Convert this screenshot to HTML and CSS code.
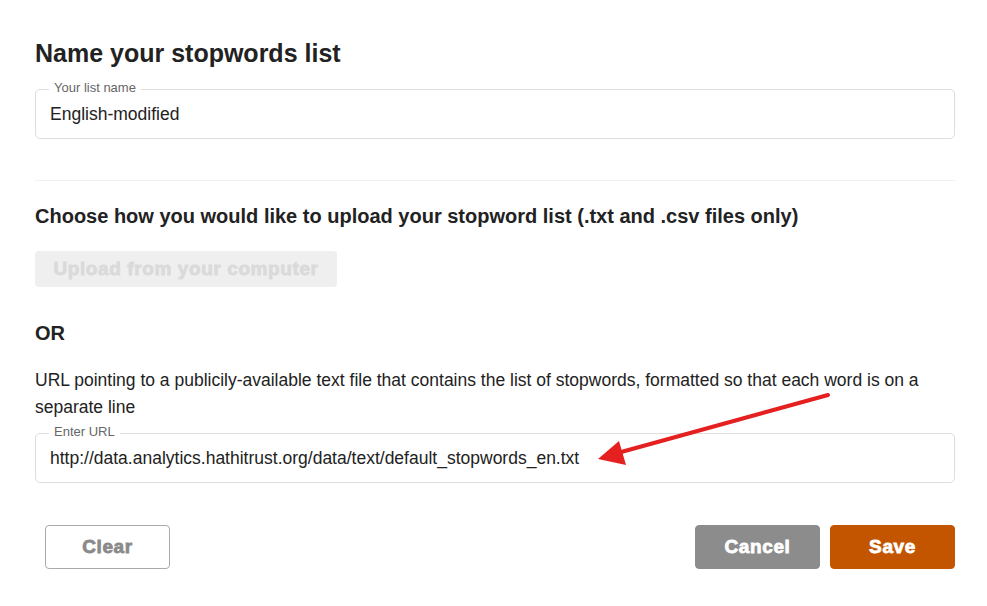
FILE: index.html
```html
<!DOCTYPE html>
<html lang="en">
<head>
<meta charset="utf-8">
<title>Name your stopwords list</title>
<link rel="stylesheet" href="styles.css">
</head>
<body>
<main class="page">
  <h1 class="title">Name your stopwords list</h1>
  <div class="field">
    <span class="field-label">Your list name</span>
    <span class="field-value">English-modified</span>
  </div>
  <hr class="divider">
  <h2 class="subtitle">Choose how you would like to upload your stopword list (.txt and .csv files only)</h2>
  <button class="btn btn-upload" disabled>Upload from your computer</button>
  <h2 class="or">OR</h2>
  <p class="desc">URL pointing to a publicily-available text file that contains the list of stopwords, formatted so that each word is on a separate line</p>
  <div class="field field-url">
    <span class="field-label">Enter URL</span>
    <span class="field-value">http://data.analytics.hathitrust.org/data/text/default_stopwords_en.txt</span>
  </div>
  <div class="actions">
    <button class="btn btn-clear">Clear</button>
    <div class="actions-right">
      <button class="btn btn-cancel">Cancel</button>
      <button class="btn btn-save">Save</button>
    </div>
  </div>
  <svg class="arrow" width="987" height="606" viewBox="0 0 987 606" aria-hidden="true">
    <line x1="828" y1="395" x2="614" y2="454" stroke="#e52020" stroke-width="4" stroke-linecap="round"/>
    <polygon points="598,459 619,441 626,465" fill="#e52020"/>
  </svg>
</main>
</body>
</html>
```
FILE: styles.css
```css
* { box-sizing: border-box; }
html, body { margin: 0; padding: 0; background: #fff; }
body {
  font-family: "Liberation Sans", Arial, sans-serif;
  color: #212121;
  width: 987px;
  height: 606px;
  overflow: hidden;
}
.page {
  position: relative;
  padding: 38px 32px 0 35px;
  height: 606px;
}
.title {
  margin: 0 0 21px;
  font-size: 25px;
  line-height: 30px;
  font-weight: 700;
  color: #222;
}
.field {
  position: relative;
  height: 50px;
  border: 1px solid #dedede;
  border-radius: 5px;
  display: flex;
  align-items: center;
  padding-left: 14px;
}
.field-label {
  position: absolute;
  left: 13px;
  top: -10px;
  padding: 0 5px;
  background: #fff;
  font-size: 13px;
  line-height: 15px;
  color: #666;
}
.field-value {
  font-size: 17.5px;
  color: #222;
}
.divider {
  margin: 41px 0 0;
  border: 0;
  border-top: 1px solid #f0f0f0;
  height: 0;
}
.subtitle {
  margin: 23px 0 23px;
  font-size: 20px;
  line-height: 24px;
  font-weight: 700;
  color: #222;
}
.btn {
  font-family: "Liberation Sans", Arial, sans-serif;
  font-weight: 700;
  font-size: 19px;
  letter-spacing: 0.6px;
  -webkit-text-stroke: 0.8px currentColor;
  border-radius: 4px;
  cursor: pointer;
  display: block;
}
.btn-upload {
  width: 302px;
  height: 36px;
  background: #efefef;
  color: #dadada;
  border: 0;
  margin: 0;
  padding: 0;
}
.or {
  margin: 34px 0 22px;
  font-size: 20px;
  line-height: 24px;
  font-weight: 700;
  color: #222;
}
.desc {
  margin: 0 0 12px;
  font-size: 17.5px;
  line-height: 27px;
  color: #222;
}
.actions {
  margin-top: 42px;
  display: flex;
  justify-content: space-between;
  align-items: center;
  padding-left: 10px;
}
.actions-right {
  display: flex;
  gap: 10px;
}
.actions .btn {
  width: 125px;
  height: 44px;
  padding: 0;
}
.btn-clear {
  background: #fff;
  border: 1px solid #aaa;
  color: #8a8a8a;
}
.btn-cancel {
  background: #8c8c8c;
  border: 1px solid #8c8c8c;
  color: #fff;
}
.btn-save {
  background: #c45500;
  border: 1px solid #c45500;
  color: #fff;
}
.arrow {
  position: absolute;
  left: 0;
  top: 0;
  pointer-events: none;
}
```
